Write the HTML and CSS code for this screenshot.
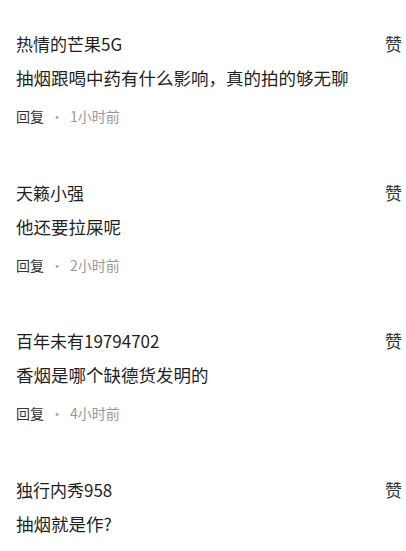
FILE: index.html
```html
<!DOCTYPE html>
<html lang="zh-CN">
<head>
  <meta charset="UTF-8">
  <title>评论</title>
  <link rel="stylesheet" href="styles.css">
</head>
<body>
  <div class="comment-list">
    <div class="comment">
      <div class="comment-head">
        <span class="name">热情的芒果5G</span>
        <span class="like">赞</span>
      </div>
      <div class="content">抽烟跟喝中药有什么影响，真的拍的够无聊</div>
      <div class="meta"><span class="reply">回复</span><span class="dot">·</span><span class="time">1小时前</span></div>
    </div>
    <div class="comment">
      <div class="comment-head">
        <span class="name">天籁小强</span>
        <span class="like">赞</span>
      </div>
      <div class="content">他还要拉屎呢</div>
      <div class="meta"><span class="reply">回复</span><span class="dot">·</span><span class="time">2小时前</span></div>
    </div>
    <div class="comment">
      <div class="comment-head">
        <span class="name">百年未有19794702</span>
        <span class="like">赞</span>
      </div>
      <div class="content">香烟是哪个缺德货发明的</div>
      <div class="meta"><span class="reply">回复</span><span class="dot">·</span><span class="time">4小时前</span></div>
    </div>
    <div class="comment">
      <div class="comment-head">
        <span class="name">独行内秀958</span>
        <span class="like">赞</span>
      </div>
      <div class="content">抽烟就是作?</div>
    </div>
  </div>
</body>
</html>
```

FILE: styles.css
```css
body {
  margin: 0;
  padding: 0;
  background: #fff;
  font-family: "Noto Sans CJK SC", "Liberation Sans", sans-serif;
  color: #1f1f1f;
}
.comment-list {
  padding: 32px 4px 0 16px;
}
.comment {
  margin-bottom: 54.5px;
}
.comment:last-child {
  margin-bottom: 0;
}
.comment-head {
  display: flex;
  justify-content: space-between;
  align-items: center;
  font-size: 17px;
  line-height: 24px;
}
.like {
  color: #333;
}
.content {
  margin-top: 10px;
  font-size: 17.5px;
  line-height: 24px;
}
.meta {
  margin-top: 16px;
  font-size: 14px;
  line-height: 20px;
  display: flex;
  align-items: center;
}
.reply {
  color: #333;
}
.dot {
  color: #aaa;
  margin: 0 6px;
}
.time {
  color: #999;
}
```
